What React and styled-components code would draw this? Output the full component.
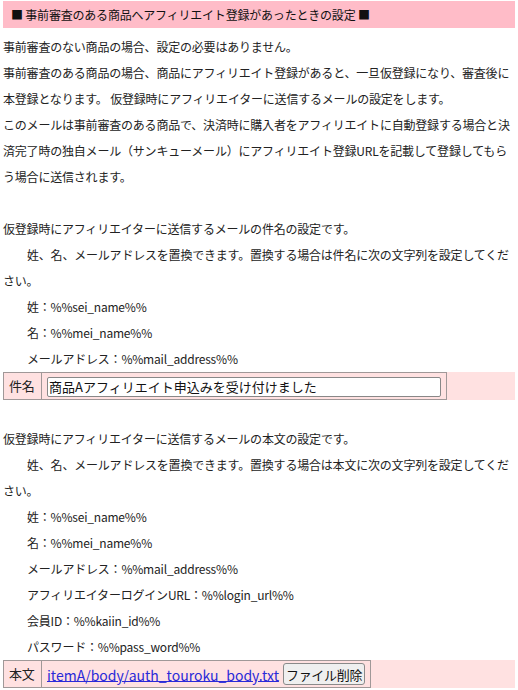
import styled, { createGlobalStyle } from "styled-components";

const GlobalStyle = createGlobalStyle`
  body {
    margin: 0;
    background: #fff;
    color: #222;
    font-family: "Noto Sans CJK JP", "Noto Sans", sans-serif;
    font-size: 12px;
  }
`;

const Page = styled.div`
  width: 512px;
  padding: 1px 3px 0 3px;
  line-height: 26px;
  letter-spacing: -0.2px;
`;

const Header = styled.div`
  background: #ffbcc8;
  padding: 0 8px;
  height: 27px;
  line-height: 27px;
  margin-bottom: 6px;
  color: #111;
`;

const Para = styled.div`
  margin: 0;
  text-indent: ${(p) => (p.$indent ? "2em" : "0")};
  padding-left: ${(p) => (p.$pad ? "24px" : "0")};
`;

const Blank = styled.div`
  height: 26px;
`;

const Band = styled.div`
  background: #ffe1e1;
  display: flex;
`;

const Table = styled.table`
  border-collapse: collapse;
  border: 1px solid #a09898;
  td {
    border: 1px solid #a09898;
    padding: 2px 5px;
    height: 20px;
    line-height: 20px;
    white-space: nowrap;
  }
`;

const Label = styled.td`
  font-size: 13px;
  width: 27px;
`;

const TextInput = styled.input`
  width: 394px;
  height: 20px;
  box-sizing: border-box;
  border: 1px solid #888;
  border-radius: 2px;
  font-family: "Noto Sans CJK JP", sans-serif;
  font-size: 13px;
  color: #111;
  padding: 0 1px;
  margin: 0;
  vertical-align: middle;
`;

const FileLink = styled.a`
  color: #2a2ad8;
  text-decoration: underline;
  font-size: 14px;
  letter-spacing: 0;
  vertical-align: middle;
`;

const DelButton = styled.button`
  margin-left: 4px;
  font-family: "Noto Sans CJK JP", sans-serif;
  font-size: 13px;
  letter-spacing: -0.3px;
  padding: 0 2px;
  height: 22px;
  border: 1px solid #8a8a8a;
  border-radius: 3px;
  background: #efefef;
  color: #111;
  vertical-align: middle;
`;

const tags1 = ["姓：%%sei_name%%", "名：%%mei_name%%", "メールアドレス：%%mail_address%%"];
const tags2 = [
  ...tags1,
  "アフィリエイターログインURL：%%login_url%%",
  "会員ID：%%kaiin_id%%",
  "パスワード：%%pass_word%%",
];

export default function App() {
  return (
    <>
      <GlobalStyle />
      <Page>
        <Header>■ 事前審査のある商品へアフィリエイト登録があったときの設定 ■</Header>
        <Para>事前審査のない商品の場合、設定の必要はありません。</Para>
        <Para>
          事前審査のある商品の場合、商品にアフィリエイト登録があると、一旦仮登録になり、審査後に本登録となります。
          仮登録時にアフィリエイターに送信するメールの設定をします。
        </Para>
        <Para>
          このメールは事前審査のある商品で、決済時に購入者をアフィリエイトに自動登録する場合と決済完了時の独自メール（サンキューメール）にアフィリエイト登録URLを記載して登録してもらう場合に送信されます。
        </Para>
        <Blank />
        <Para>仮登録時にアフィリエイターに送信するメールの件名の設定です。</Para>
        <Para $indent>
          姓、名、メールアドレスを置換できます。置換する場合は件名に次の文字列を設定してください。
        </Para>
        {tags1.map((t) => (
          <Para key={t} $pad>
            {t}
          </Para>
        ))}
        <Band>
          <Table>
            <tbody>
              <tr>
                <Label>件名</Label>
                <td>
                  <TextInput defaultValue="商品Aアフィリエイト申込みを受け付けました" />
                </td>
              </tr>
            </tbody>
          </Table>
        </Band>
        <Blank />
        <Para>仮登録時にアフィリエイターに送信するメールの本文の設定です。</Para>
        <Para $indent>
          姓、名、メールアドレスを置換できます。置換する場合は本文に次の文字列を設定してください。
        </Para>
        {tags2.map((t) => (
          <Para key={t} $pad>
            {t}
          </Para>
        ))}
        <Band>
          <Table>
            <tbody>
              <tr>
                <Label>本文</Label>
                <td>
                  <FileLink href="#">itemA/body/auth_touroku_body.txt</FileLink>
                  <DelButton>ファイル削除</DelButton>
                </td>
              </tr>
            </tbody>
          </Table>
        </Band>
      </Page>
    </>
  );
}
